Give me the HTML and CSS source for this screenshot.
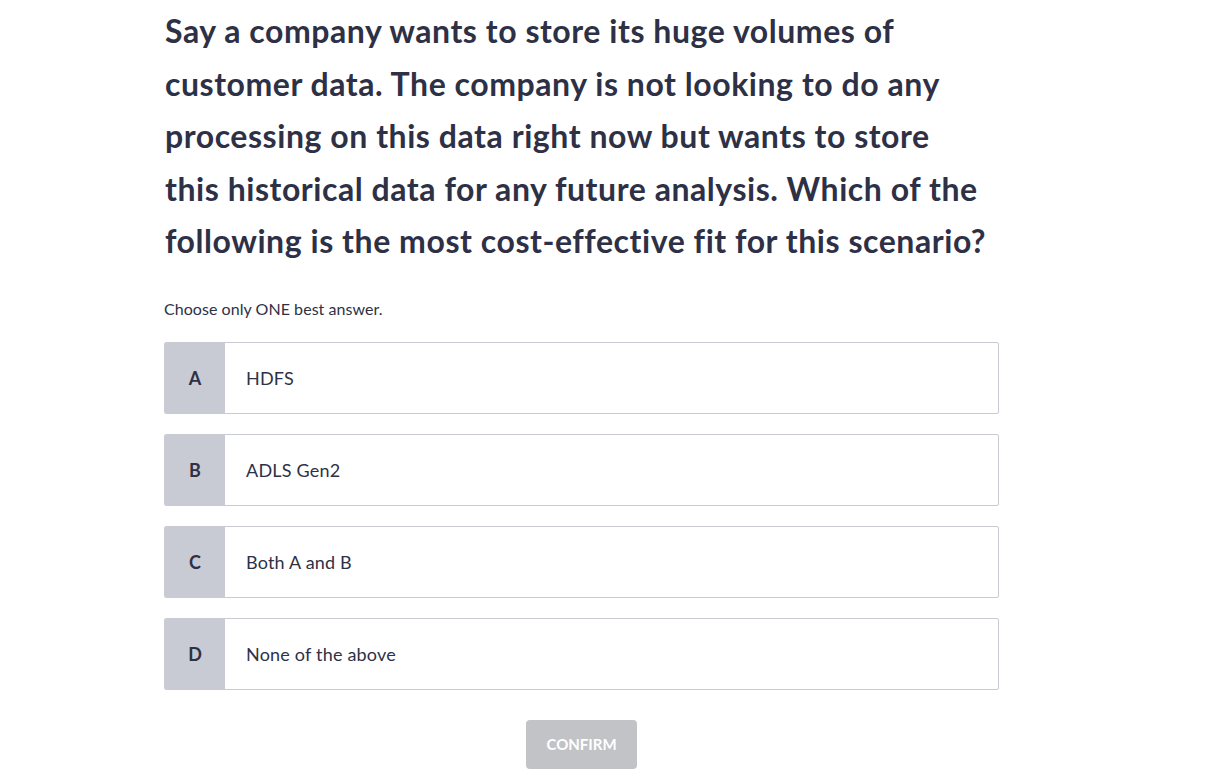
FILE: index.html
```html
<!DOCTYPE html>
<html>
<head>
<meta charset="utf-8">
<link rel="stylesheet" href="styles.css">
</head>
<body>
<main class="quiz">
  <h1 class="question">Say a company wants to store its huge volumes of<br>customer data. The company is not looking to do any<br>processing on this data right now but wants to store<br>this historical data for any future analysis. Which of the<br>following is the most cost-effective fit for this scenario?</h1>
  <p class="hint">Choose only ONE best answer.</p>
  <ul class="options">
    <li class="option"><span class="letter">A</span><span class="label">HDFS</span></li>
    <li class="option"><span class="letter">B</span><span class="label">ADLS Gen2</span></li>
    <li class="option"><span class="letter">C</span><span class="label">Both A and B</span></li>
    <li class="option"><span class="letter">D</span><span class="label">None of the above</span></li>
  </ul>
  <div class="actions"><button class="confirm" disabled>CONFIRM</button></div>
</main>
</body>
</html>
```
FILE: styles.css
```css
* { box-sizing: border-box; }
html, body { margin: 0; padding: 0; background: #fff; }
body {
  font-family: Lato, "Open Sans", "Liberation Sans", sans-serif;
  color: #2e3146;
}
.quiz {
  width: 835px;
  margin-left: 164px;
  padding-top: 5px;
}
.question {
  margin: 0 0 0 1px;
  font-size: 32px;
  font-weight: 700;
  line-height: 52.5px;
  white-space: nowrap;
  letter-spacing: 0.55px;
}
.hint {
  margin: 31px 0 0 0;
  font-size: 16px;
  line-height: 20px;
  letter-spacing: 0.05px;
}
.options {
  list-style: none;
  margin: 23px 0 0 0;
  padding: 0;
  display: flex;
  flex-direction: column;
  gap: 20px;
}
.option {
  display: flex;
  height: 72px;
  border: 1px solid #cacbd2;
  border-radius: 2px;
  overflow: hidden;
}
.letter {
  width: 60px;
  flex: none;
  background: #c9cbd4;
  display: flex;
  align-items: center;
  justify-content: center;
  font-weight: 700;
  font-size: 18px;
}
.label {
  display: flex;
  align-items: center;
  padding-left: 21px;
  font-size: 18px;
  letter-spacing: 0.2px;
}
.actions {
  display: flex;
  justify-content: center;
  margin-top: 30px;
}
.confirm {
  width: 111px;
  height: 49px;
  border: none;
  border-radius: 4px;
  background: #c2c3c7;
  color: #fff;
  font-family: inherit;
  font-weight: 700;
  font-size: 15px;
  padding: 0;
}
```
